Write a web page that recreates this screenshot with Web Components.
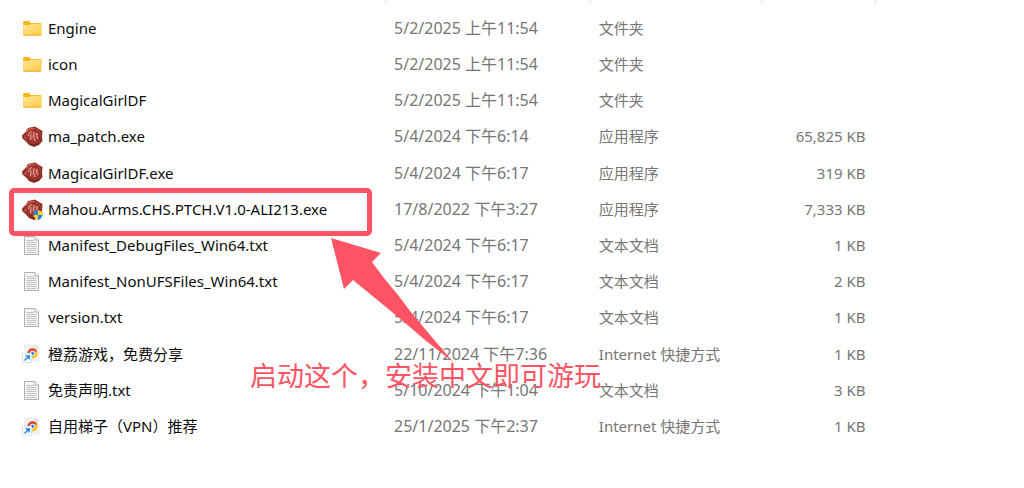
<!DOCTYPE html>
<html lang="zh-CN">
<head>
<meta charset="utf-8">
<meta name="viewport" content="width=device-width, initial-scale=1">
<title>Files</title>
<style>
  body {
    margin: 0;
    background: #fff;
    color: #1a1a1a;
    font-family: "Noto Sans", "Noto Sans CJK SC", sans-serif;
    font-size: 15px;
    line-height: 20px;
  }
</style>
</head>
<body>
<file-list>
  <callout-note>启动这个，安装中文即可游玩</callout-note>
</file-list>

<template id="file-list">
  <style>
    :host { display: block; position: relative; overflow: hidden; }
    table { width: 100%; table-layout: fixed; border-collapse: separate; border-spacing: 0; }
    .name { width: 37.7%; }
    .date { width: 20%; }
    .type { width: 16.7%; }
    .size { width: 11.1%; }
    th { height: 5px; padding: 0; border-right: 1px solid #e5e5e5; }
    th:last-child { border-right: 0; }
    thead tr { line-height: 0; }
    tbody::before { content: ""; display: block; height: 5px; }
    td { height: 36px; padding: 0 8px; white-space: nowrap; color: #767676; }
    tr:nth-child(5n) td { height: 37px; }
    td:first-child { padding-left: 22px; color: #0c0c0c; }
    td:nth-child(2) { font-size: 16px; }
    td:nth-child(4) { padding-right: 10px; text-align: right; }
    .file { display: flex; align-items: center; gap: 5px; position: relative; }
    .marked::after {
      content: "";
      position: absolute;
      inset: -11px 6px -16px -13px;
      border: 5px solid #ff5464;
      border-radius: 5px;
    }
  </style>
  <table aria-label="Files">
    <colgroup><col class="name"><col class="date"><col class="type"><col class="size"><col></colgroup>
    <thead><tr><th></th><th></th><th></th><th></th><th></th></tr></thead>
    <tbody></tbody>
  </table>
  <slot></slot>
</template>

<template id="callout-note">
  <style>
    :host {
      position: absolute;
      left: 250px;
      top: 238px;
      color: #ff5464;
      font-size: 27px;
      line-height: 32px;
      white-space: nowrap;
    }
    svg { display: block; width: 122px; height: 122px; margin-left: 81px; overflow: visible; }
  </style>
  <svg viewBox="0 0 122 122" aria-hidden="true"><path fill="#ff5464" d="M0 0 50 15 41 24Q53 41 67 57Q80 75 94 91L122 124Q108 113 94 102Q78 88 61 74L22 42 13 51Z"/></svg>
  <slot></slot>
</template>

<template id="icon-folder">
  <svg viewBox="0 0 22 22">
    <defs><linearGradient id="g" x1="0" y1="0" x2="1" y2="1"><stop offset="0" stop-color="#ffe69c"/><stop offset="1" stop-color="#ffcb3f"/></linearGradient></defs>
    <path d="M1 4.500Q1 3 2.300 3H7L9 5H18.500Q19.500 5 19.500 6V9H1Z" fill="#f8b51c"/>
    <path d="M1 7H7.500L9.200 5.700H19.500V16.500Q19.500 17.500 18.500 17.500H2Q1 17.500 1 16.500Z" fill="url(#g)"/>
    <path d="M1 16.500Q1 17.700 2 17.700H18.500Q19.500 17.700 19.500 16.500Z" fill="#eeb13a"/>
  </svg>
</template>

<template id="icon-seal">
  <svg viewBox="0 0 22 22">
    <path d="M6 2 13 .600 17 3 20.500 5 20 11 20.500 15 17 19 12 21 7 19 4 15.500.500 12.500 0 9.500 3.500 6Z" fill="#8f3028"/>
    <path d="M6 3 12 1.500 18 5 19 10 17 16 12 19 7 16 3 12 4 7Z" fill="#b8453a"/>
    <circle cx="11.500" cy="10.500" r="6.500" fill="#ad3b31" stroke="#7d2923"/>
    <path d="M6 10Q7 6 10 5.500M9 8 8.500 14M12 6 11.500 10 13 15M15.500 7 14.500 10 16 13" fill="none" stroke="#e0b0a8" stroke-width="1.200" opacity=".85"/>
    <path d="M8 11.500 11 11M13 8.500 15 8" fill="none" stroke="#c9857c"/>
    <path d="M4 6 7 3 12 2.500M2 11 4 12" fill="none" stroke="#d8695b"/>
    <path d="M8 18 12 19 17 17" fill="none" stroke="#6b211c"/>
  </svg>
</template>

<template id="icon-shield">
  <svg class="badge" viewBox="0 0 10 10">
    <path d="M5 0Q3 1.500.500 1.300V5H5Z" fill="#2583d8"/>
    <path d="M5 0Q7 1.500 9.500 1.300V5H5Z" fill="#ffd52e"/>
    <path d="M.500 5H5V10Q1 8.500.500 5Z" fill="#ffd52e"/>
    <path d="M9.500 5H5V10Q9 8.500 9.500 5Z" fill="#2583d8"/>
  </svg>
</template>

<template id="icon-text">
  <svg viewBox="0 0 22 22">
    <path d="M2.500 1.500H13L16.500 5V19.500H2.500Z" fill="#f4f4f4" stroke="#b0b0b0"/>
    <path d="M13 1.500V5H16.500" fill="#fff" stroke="#b0b0b0"/>
    <path d="M4.500 5.500H12M4.500 7.500H14.500M4.500 9.500H14.500M4.500 11.500H14.500M4.500 13.500H14.500M4.500 15.500H14.500M4.500 17.500H14.500" stroke="#c4c4c4"/>
  </svg>
</template>

<template id="icon-link">
  <svg viewBox="0 0 22 22">
    <path d="M2 2Q2 1 3 1H13L17.500 5.500V18Q17.500 19 16.500 19H3Q2 19 2 18Z" fill="#f1f1f1"/>
    <path d="M13 1V5.500H17.500Z" fill="#dedede"/>
    <circle cx="10.500" cy="10.500" r="5" fill="#fbc116"/>
    <path d="M5.700 9A5 5 0 0 1 15.200 8.500H10.500L8 12Z" fill="#e84335"/>
    <path d="M5.800 8.500 9 13 8 15A5 5 0 0 1 5.800 8.500Z" fill="#31a853"/>
    <circle cx="10.500" cy="10.500" r="2.300" fill="#4285f4" stroke="#fff"/>
    <rect x=".500" y="10.500" width="9" height="9" fill="#fff" stroke="#d2e3f2"/>
    <path d="M2.500 17.500 7 13M3.500 12.800H7.200V16.500" fill="none" stroke="#1580d8" stroke-width="1.300"/>
  </svg>
</template>

<script>
  const cloneOf = id => document.getElementById(id).content.cloneNode(true);

  class FileIcon extends HTMLElement {
    connectedCallback() {
      if (this.shadowRoot) return;
      const root = this.attachShadow({ mode: "open" });
      root.innerHTML = `<style>
        :host { display: block; position: relative; flex: none; width: 21px; height: 21px; }
        svg { display: block; width: 22px; height: 22px; }
        .badge { position: absolute; right: 0; bottom: 0; width: 10px; height: 10px; }
      </style>`;
      root.append(cloneOf("icon-" + this.getAttribute("kind")));
      if (this.hasAttribute("elevated")) root.append(cloneOf("icon-shield"));
    }
  }

  class CalloutNote extends HTMLElement {
    constructor() {
      super();
      this.attachShadow({ mode: "open" }).append(cloneOf("callout-note"));
    }
  }

  const files = [
    ["folder", "Engine", "5/2/2025 上午11:54", "文件夹", ""],
    ["folder", "icon", "5/2/2025 上午11:54", "文件夹", ""],
    ["folder", "MagicalGirlDF", "5/2/2025 上午11:54", "文件夹", ""],
    ["seal", "ma_patch.exe", "5/4/2024 下午6:14", "应用程序", "65,825 KB"],
    ["seal", "MagicalGirlDF.exe", "5/4/2024 下午6:17", "应用程序", "319 KB"],
    ["seal", "Mahou.Arms.CHS.PTCH.V1.0-ALI213.exe", "17/8/2022 下午3:27", "应用程序", "7,333 KB", true],
    ["text", "Manifest_DebugFiles_Win64.txt", "5/4/2024 下午6:17", "文本文档", "1 KB"],
    ["text", "Manifest_NonUFSFiles_Win64.txt", "5/4/2024 下午6:17", "文本文档", "2 KB"],
    ["text", "version.txt", "5/4/2024 下午6:17", "文本文档", "1 KB"],
    ["link", "橙荔游戏，免费分享", "22/11/2024 下午7:36", "Internet 快捷方式", "1 KB"],
    ["text", "免责声明.txt", "5/10/2024 下午1:04", "文本文档", "3 KB"],
    ["link", "自用梯子（VPN）推荐", "25/1/2025 下午2:37", "Internet 快捷方式", "1 KB"]
  ];

  class FileList extends HTMLElement {
    constructor() {
      super();
      const root = this.attachShadow({ mode: "open" });
      root.append(cloneOf("file-list"));
      root.querySelector("tbody").innerHTML = files.map(([kind, name, date, type, size, marked]) => `
        <tr>
          <td><div class="file${marked ? " marked" : ""}"><file-icon kind="${kind}"${marked ? " elevated" : ""}></file-icon><span>${name}</span></div></td>
          <td>${date}</td><td>${type}</td><td>${size}</td><td></td>
        </tr>`).join("");
    }
  }

  customElements.define("file-icon", FileIcon);
  customElements.define("callout-note", CalloutNote);
  customElements.define("file-list", FileList);
</script>
</body>
</html>
